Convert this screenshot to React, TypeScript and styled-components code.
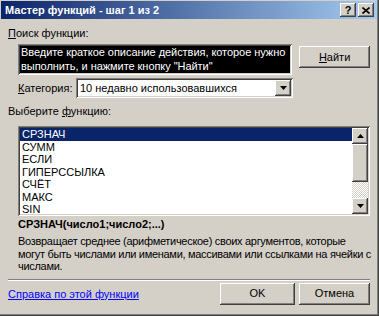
import React from 'react';
import styled, { createGlobalStyle } from 'styled-components';

const functions = ['СРЗНАЧ', 'СУММ', 'ЕСЛИ', 'ГИПЕРССЫЛКА', 'СЧЁТ', 'МАКС', 'SIN'];

const GlobalStyle = createGlobalStyle`
  body {
    margin: 0;
    background: #d4d0c8;
  }
`;

const raised = `
  background: #d4d0c8;
  box-shadow: inset -1px -1px #404040, inset 1px 1px #ffffff,
    inset -2px -2px #808080, inset 2px 2px #d4d0c8;
`;

const sunken = `
  box-shadow: inset 1px 1px #808080, inset -1px -1px #ffffff,
    inset 2px 2px #404040, inset -2px -2px #d4d0c8;
`;

const Window = styled.div`
  width: 379px;
  height: 316px;
  box-sizing: border-box;
  padding: 1px 2px 2px 1px;
  background: #d4d0c8;
  box-shadow: inset -1px -1px #404040, inset -2px -2px #808080;
  display: flex;
  flex-direction: column;
  font-family: 'Liberation Sans', Arial, sans-serif;
  font-size: 11px;
  color: #000;
`;

const TitleBar = styled.div`
  height: 18px;
  display: flex;
  align-items: center;
  padding: 0 3px 0 4px;
  background: linear-gradient(to right, #0a246a, #a6caf0);
  color: #fff;
  font-weight: bold;
`;

const Title = styled.span`
  flex: 1;
  white-space: nowrap;
`;

const CaptionButton = styled.div<{ $gap?: number }>`
  ${raised}
  width: 16px;
  height: 14px;
  margin-left: ${(p) => p.$gap || 0}px;
  display: flex;
  align-items: center;
  justify-content: center;
  color: #000;
  font-size: 11px;
  font-weight: bold;
  line-height: 14px;
`;

const Body = styled.div`
  flex: 1;
  display: flex;
  flex-direction: column;
  padding: 0 7px 0 7px;
`;

const Label = styled.div<{ $top: number; $indent?: number }>`
  margin-top: ${(p) => p.$top}px;
  padding-left: ${(p) => p.$indent || 0}px;
  line-height: 13px;
  height: 13px;
  white-space: nowrap;
`;

const SearchRow = styled.div`
  display: flex;
  align-items: flex-start;
  margin-top: 4px;
  padding-left: 10px;
`;

const SearchBox = styled.div`
  ${sunken}
  width: 275px;
  height: 31px;
  box-sizing: border-box;
  padding: 2px 3px;
  background: #000;
  color: #fff;
  line-height: 13.5px;
  letter-spacing: -0.05px;
  white-space: nowrap;
  overflow: hidden;
`;

const PushButton = styled.div<{ $width: number; $gap?: number; $top?: number }>`
  ${raised}
  width: ${(p) => p.$width}px;
  height: 22px;
  margin-left: ${(p) => p.$gap || 0}px;
  margin-top: ${(p) => p.$top || 0}px;
  display: flex;
  align-items: center;
  justify-content: center;
  line-height: 13px;
`;

const CategoryRow = styled.div`
  display: flex;
  align-items: center;
  margin-top: 3px;
  padding-left: 10px;
`;

const CategoryLabel = styled.span`
  width: 58px;
  white-space: nowrap;
`;

const Combo = styled.div`
  ${sunken}
  width: 217px;
  height: 20px;
  box-sizing: border-box;
  padding: 2px 2px 2px 4px;
  background: #fff;
  display: flex;
  align-items: center;
`;

const ComboText = styled.span`
  flex: 1;
  white-space: nowrap;
`;

const ArrowButton = styled.div<{ $height?: number }>`
  ${raised}
  width: 16px;
  height: ${(p) => p.$height || 16}px;
  display: flex;
  align-items: center;
  justify-content: center;
  flex-shrink: 0;
`;

const ListBox = styled.div`
  ${sunken}
  margin-top: 8px;
  margin-left: 10px;
  width: 352px;
  height: 90px;
  box-sizing: border-box;
  padding: 2px;
  background: #fff;
  display: flex;
`;

const Rows = styled.div`
  flex: 1;
  display: flex;
  flex-direction: column;
`;

const Row = styled.div<{ $selected?: boolean }>`
  height: 12.5px;
  line-height: 12.5px;
  padding-left: 2px;
  white-space: nowrap;
  background: ${(p) => (p.$selected ? '#0a246a' : 'transparent')};
  color: ${(p) => (p.$selected ? '#fff' : '#000')};
`;

const ScrollBar = styled.div`
  width: 16px;
  display: flex;
  flex-direction: column;
`;

const Thumb = styled.div`
  ${raised}
  height: 38px;
`;

const Track = styled.div`
  flex: 1;
  background: repeating-conic-gradient(#d4d0c8 0 25%, #ffffff 0 50%) 0 0 / 2px 2px;
`;

const Signature = styled.div`
  margin-top: 2px;
  padding-left: 10px;
  font-weight: bold;
  line-height: 13px;
  white-space: nowrap;
`;

const Description = styled.div`
  margin-top: 4px;
  padding-left: 10px;
  line-height: 12.5px;
  letter-spacing: -0.3px;
  white-space: nowrap;
`;

const Separator = styled.div`
  margin-top: 6px;
  height: 1px;
  background: #808080;
  border-bottom: 1px solid #fff;
`;

const Footer = styled.div`
  display: flex;
  align-items: center;
  margin-top: 2px;
`;

const HelpLink = styled.a`
  flex: 1;
  color: #0000ff;
  text-decoration: underline;
  white-space: nowrap;
`;

const Triangle: React.FC<{ down?: boolean }> = ({ down }) => (
  <svg width='7' height='4' viewBox='0 0 7 4'>
    <path d={down ? 'M0 0H7L3.5 4Z' : 'M0 4H7L3.5 0Z'} fill='#000' />
  </svg>
);

const App: React.FC = () => {
  return (
    <>
      <GlobalStyle />
      <Window>
        <TitleBar>
          <Title>Мастер функций - шаг 1 из 2</Title>
          <CaptionButton>?</CaptionButton>
          <CaptionButton $gap={2}>
            <svg width='8' height='7' viewBox='0 0 8 7'>
              <path d='M0.5 0.5L7.5 6.5M7.5 0.5L0.5 6.5' stroke='#000' strokeWidth='1.6' />
            </svg>
          </CaptionButton>
        </TitleBar>
        <Body>
          <Label $top={8}>
            <u>П</u>оиск функции:
          </Label>
          <SearchRow>
            <SearchBox>
              Введите краткое описание действия, которое нужно
              <br />
              выполнить, и нажмите кнопку "Найти"
            </SearchBox>
            <PushButton $width={71} $gap={7} $top={2}>
              <span>
                <u>Н</u>айти
              </span>
            </PushButton>
          </SearchRow>
          <CategoryRow>
            <CategoryLabel>
              <u>К</u>атегория:
            </CategoryLabel>
            <Combo>
              <ComboText>10 недавно использовавшихся</ComboText>
              <ArrowButton>
                <Triangle down />
              </ArrowButton>
            </Combo>
          </CategoryRow>
          <Label $top={7}>
            Выберите <u>ф</u>ункцию:
          </Label>
          <ListBox>
            <Rows>
              {functions.map((name, index) => (
                <Row key={name} $selected={index === 0}>
                  {name}
                </Row>
              ))}
            </Rows>
            <ScrollBar>
              <ArrowButton>
                <Triangle />
              </ArrowButton>
              <Thumb />
              <Track />
              <ArrowButton>
                <Triangle down />
              </ArrowButton>
            </ScrollBar>
          </ListBox>
          <Signature>СРЗНАЧ(число1;число2;...)</Signature>
          <Description>
            Возвращает среднее (арифметическое) своих аргументов, которые
            <br />
            могут быть числами или именами, массивами или ссылками на ячейки с
            <br />
            числами.
          </Description>
          <Separator />
          <Footer>
            <HelpLink>Справка по этой функции</HelpLink>
            <PushButton $width={75}>OK</PushButton>
            <PushButton $width={71} $gap={4}>
              Отмена
            </PushButton>
          </Footer>
        </Body>
      </Window>
    </>
  );
};

export default App;
